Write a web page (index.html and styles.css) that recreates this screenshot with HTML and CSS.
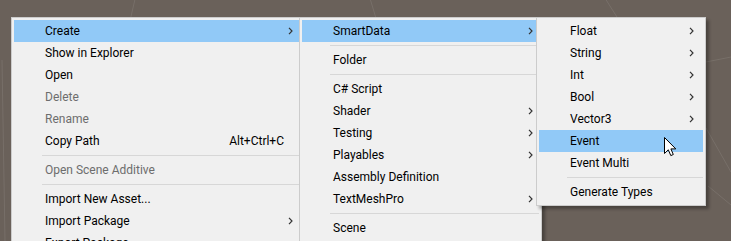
FILE: index.html
```html
<!DOCTYPE html>
<html>
<head>
<meta charset="utf-8">
<link rel="stylesheet" href="styles.css">
</head>
<body>
<div class="scene">
  <svg class="grid" width="731" height="241" viewBox="0 0 731 241" aria-hidden="true">
    <line x1="136" y1="-5" x2="129" y2="25"/>
    <line x1="369" y1="-5" x2="378" y2="25"/>
    <line x1="603" y1="-5" x2="622" y2="25"/>
    <line x1="706" y1="62" x2="731" y2="57"/>
    <line x1="706" y1="128" x2="731" y2="172"/>
    <line x1="708" y1="186" x2="731" y2="205"/>
    <line x1="2" y1="60" x2="5" y2="241"/>
  </svg>

  <div class="menus">
    <div class="menu m1">
      <div class="item hl"><span class="label">Create</span><svg class="arrow" viewBox="0 0 5 8"><path d="M1 0.8 L4 4 L1 7.2"/></svg></div>
      <div class="item"><span class="label">Show in Explorer</span></div>
      <div class="item"><span class="label">Open</span></div>
      <div class="item dis"><span class="label">Delete</span></div>
      <div class="item dis"><span class="label">Rename</span></div>
      <div class="item"><span class="label">Copy Path</span><span class="shortcut">Alt+Ctrl+C</span></div>
      <div class="sep"></div>
      <div class="item dis"><span class="label">Open Scene Additive</span></div>
      <div class="sep"></div>
      <div class="item"><span class="label">Import New Asset...</span></div>
      <div class="item"><span class="label">Import Package</span><svg class="arrow" viewBox="0 0 5 8"><path d="M1 0.8 L4 4 L1 7.2"/></svg></div>
      <div class="item"><span class="label">Export Package...</span></div>
    </div>

    <div class="menu m2">
      <div class="item hl"><span class="label">SmartData</span><svg class="arrow" viewBox="0 0 5 8"><path d="M1 0.8 L4 4 L1 7.2"/></svg></div>
      <div class="sep"></div>
      <div class="item"><span class="label">Folder</span></div>
      <div class="sep"></div>
      <div class="item"><span class="label">C# Script</span></div>
      <div class="item"><span class="label">Shader</span><svg class="arrow" viewBox="0 0 5 8"><path d="M1 0.8 L4 4 L1 7.2"/></svg></div>
      <div class="item"><span class="label">Testing</span><svg class="arrow" viewBox="0 0 5 8"><path d="M1 0.8 L4 4 L1 7.2"/></svg></div>
      <div class="item"><span class="label">Playables</span><svg class="arrow" viewBox="0 0 5 8"><path d="M1 0.8 L4 4 L1 7.2"/></svg></div>
      <div class="item"><span class="label">Assembly Definition</span></div>
      <div class="item"><span class="label">TextMeshPro</span><svg class="arrow" viewBox="0 0 5 8"><path d="M1 0.8 L4 4 L1 7.2"/></svg></div>
      <div class="sep"></div>
      <div class="item"><span class="label">Scene</span></div>
      <div class="item empty"></div>
    </div>

    <div class="menu m3">
      <div class="item"><span class="label">Float</span><svg class="arrow" viewBox="0 0 5 8"><path d="M1 0.8 L4 4 L1 7.2"/></svg></div>
      <div class="item"><span class="label">String</span><svg class="arrow" viewBox="0 0 5 8"><path d="M1 0.8 L4 4 L1 7.2"/></svg></div>
      <div class="item"><span class="label">Int</span><svg class="arrow" viewBox="0 0 5 8"><path d="M1 0.8 L4 4 L1 7.2"/></svg></div>
      <div class="item"><span class="label">Bool</span><svg class="arrow" viewBox="0 0 5 8"><path d="M1 0.8 L4 4 L1 7.2"/></svg></div>
      <div class="item"><span class="label">Vector3</span><svg class="arrow" viewBox="0 0 5 8"><path d="M1 0.8 L4 4 L1 7.2"/></svg></div>
      <div class="item hl"><span class="label">Event</span></div>
      <div class="item"><span class="label">Event Multi</span></div>
      <div class="sep"></div>
      <div class="item"><span class="label">Generate Types</span></div>
    </div>
  </div>

  <svg class="cursor" width="13" height="20" viewBox="0 0 13 20" aria-hidden="true">
    <path d="M0.5 0.5 L0.5 16.5 L4.3 12.8 L6.8 18.6 L9.3 17.5 L6.9 11.9 L11.8 11.9 Z"/>
  </svg>
</div>
</body>
</html>
```
FILE: styles.css
```css
html, body {
  margin: 0;
  padding: 0;
}

body {
  width: 731px;
  height: 241px;
  overflow: hidden;
  background: #6a615a;
  font-family: Roboto, "Noto Sans", sans-serif;
  font-size: 12px;
  color: #000;
}

.scene {
  position: relative;
  width: 731px;
  height: 241px;
  overflow: hidden;
}

.grid {
  position: absolute;
  left: 0;
  top: 0;
}

.grid line {
  stroke: rgba(255, 255, 255, 0.09);
  stroke-width: 1;
}

.menus {
  position: relative;
  display: flex;
  align-items: flex-start;
  padding: 17px 0 0 11px;
}

.menu {
  position: relative;
  box-sizing: border-box;
  background: #f0f0f0;
  border: 1px solid #cccccc;
  padding: 2px;
  box-shadow: 3px 3px 3px rgba(0, 0, 0, 0.32);
  flex: none;
}

.m1 {
  width: 291px;
}

.m2 {
  width: 243px;
  margin-left: -3px;
}

.m3 {
  width: 170px;
  margin-left: -6px;
}

.item {
  display: flex;
  align-items: center;
  height: 22px;
  line-height: 22px;
  padding: 0 6px 0 31px;
  white-space: nowrap;
}

.m3 .item {
  padding-right: 9px;
}

.item.hl {
  background: #91c9f7;
}

.item.dis {
  color: #6d6d6d;
}

.label {
  flex: 1;
}

.shortcut {
  margin-right: 9px;
}

.arrow {
  width: 5px;
  height: 8px;
  flex: none;
}

.arrow path {
  fill: none;
  stroke: #333333;
  stroke-width: 1.2;
}

.sep {
  height: 7px;
  display: flex;
  align-items: center;
  padding-left: 28px;
}

.sep::before {
  content: "";
  flex: 1;
  height: 1px;
  background: #d7d7d7;
}

.cursor {
  position: absolute;
  left: 664px;
  top: 137px;
}

.cursor path {
  fill: #ffffff;
  stroke: #000000;
  stroke-width: 1;
  stroke-linejoin: miter;
}
```
